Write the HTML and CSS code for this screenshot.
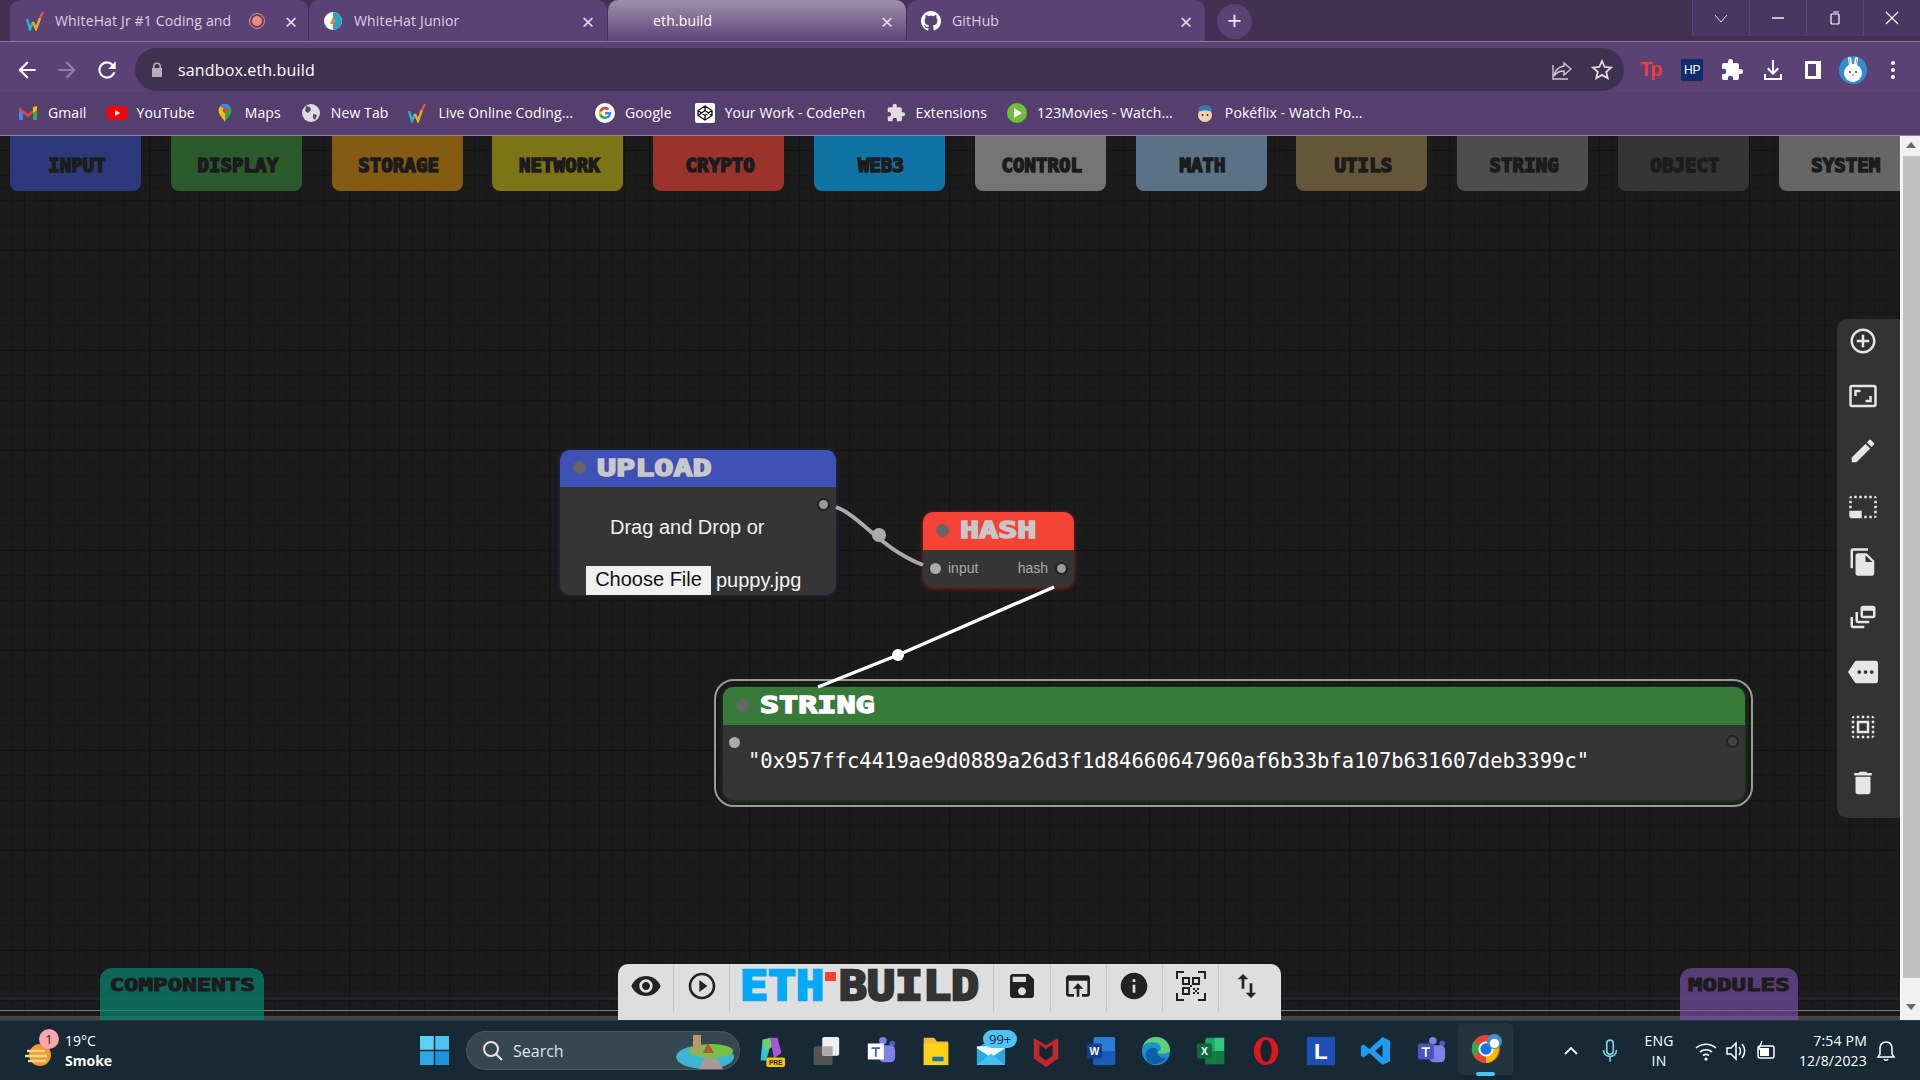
FILE: index.html
```html
<!DOCTYPE html>
<html lang="en">
<head>
    <meta charset="UTF-8">
    <title>eth.build</title>
    <link rel="stylesheet" href="styles.css">
</head>
<body>
    <header class="chrome">
        <div class="tabstrip">
            <div class="tab">
                <svg class="favicon" viewBox="0 0 20 20"><path d="M3 8l3 10 3-7" fill="none" stroke="#29b6c6" stroke-width="2.4"/><path d="M9 11l3 7 4-11" fill="none" stroke="#f5a623" stroke-width="2.4"/><path d="M16 7l3-6" fill="none" stroke="#ef5350" stroke-width="2"/></svg>
                <span class="tab-title tab-title-short">WhiteHat Jr #1 Coding and</span>
                <span class="rec-dot"></span>
                <span class="tab-close">×</span>
            </div>
            <div class="tab">
                <svg class="favicon" viewBox="0 0 20 20"><circle cx="10" cy="10" r="9" fill="#fff"/><path d="M10 1a9 9 0 0 1 0 18z" fill="#2aa3c9"/><path d="M11 4l-4 9h3l-1 4 4-8h-3z" fill="#f58220"/></svg>
                <span class="tab-title">WhiteHat Junior</span>
                <span class="tab-close">×</span>
            </div>
            <div class="tab tab-active">
                <span class="favicon"></span>
                <span class="tab-title">eth.build</span>
                <span class="tab-close">×</span>
            </div>
            <div class="tab">
                <svg class="favicon" viewBox="0 0 16 16"><path fill="#fff" d="M8 0C3.58 0 0 3.58 0 8c0 3.54 2.29 6.53 5.47 7.59.4.07.55-.17.55-.38 0-.19-.01-.82-.01-1.49-2.01.37-2.53-.49-2.69-.94-.09-.23-.48-.94-.82-1.13-.28-.15-.68-.52-.01-.53.63-.01 1.08.58 1.23.82.72 1.21 1.87.87 2.33.66.07-.52.28-.87.51-1.07-1.78-.2-3.64-.89-3.64-3.95 0-.87.31-1.59.82-2.15-.08-.2-.36-1.02.08-2.12 0 0 .67-.21 2.2.82.64-.18 1.32-.27 2-.27s1.36.09 2 .27c1.53-1.04 2.2-.82 2.2-.82.44 1.1.16 1.92.08 2.12.51.56.82 1.27.82 2.15 0 3.07-1.87 3.75-3.65 3.95.29.25.54.73.54 1.48 0 1.07-.01 1.93-.01 2.2 0 .21.15.46.55.38A8.01 8.01 0 0 0 16 8c0-4.42-3.58-8-8-8z"/></svg>
                <span class="tab-title">GitHub</span>
                <span class="tab-close">×</span>
            </div>
            <div class="new-tab">+</div>
            <div class="window-btns">
                <span class="window-btn"><svg width="14" height="14" viewBox="0 0 14 14"><path d="M1 4l6 7 6-7" fill="none" stroke="#ddd"/></svg></span>
                <span class="window-btn"><svg width="14" height="14" viewBox="0 0 14 14"><path d="M1 7h12" stroke="#fff" stroke-width="1.4"/></svg></span>
                <span class="window-btn"><svg width="14" height="14" viewBox="0 0 14 14"><rect x="3" y="3" width="8" height="10" rx="1" fill="none" stroke="#fff" stroke-width="1.2"/><path d="M5 1h6" stroke="#fff"/></svg></span>
                <span class="window-btn"><svg width="14" height="14" viewBox="0 0 14 14"><path d="M1 1l12 12M13 1L1 13" stroke="#fff" stroke-width="1.2"/></svg></span>
            </div>
        </div>

        <div class="toolbar">
            <div class="nav-btns">
                <svg class="nav-icon" viewBox="0 0 24 24"><path d="M20 11H7.83l5.59-5.59L12 4l-8 8 8 8 1.41-1.41L7.83 13H20z"/></svg>
                <svg class="nav-icon nav-off" viewBox="0 0 24 24"><path d="M12 4l-1.41 1.41L16.17 11H4v2h12.17l-5.58 5.59L12 20l8-8z"/></svg>
                <svg class="nav-icon" viewBox="0 0 24 24"><path d="M17.65 6.35A7.96 7.96 0 0 0 12 4a8 8 0 1 0 7.73 10h-2.08A6 6 0 1 1 12 6c1.66 0 3.14.69 4.22 1.78L13 11h7V4z"/></svg>
            </div>
            <div class="urlbar">
                <svg class="lock" viewBox="0 0 12 16"><path fill="#b5adbd" d="M2 6V4.5a4 4 0 0 1 8 0V6h1v9H1V6zm1.5 0h5V4.5a2.5 2.5 0 0 0-5 0z"/></svg>
                <span class="url">sandbox.eth.build</span>
                <svg class="url-icon share" viewBox="0 0 24 24"><path d="M14 5l7 6-7 6v-4c-5 0-8 2-10 5 1-5 4-9 10-10zM3 7v14h15" fill="none" stroke="#cfc9d4" stroke-width="1.4"/></svg>
                <svg class="url-icon" viewBox="0 0 24 24"><path d="M12 3l2.7 6 6.3.6-4.8 4.2 1.5 6.4L12 16.9l-5.7 3.3 1.5-6.4L3 9.6 9.3 9z" fill="none" stroke="#e0dbe4" stroke-width="1.8"/></svg>
            </div>
            <div class="ext-btns">
                <span class="tp">Tp</span>
                <span class="hp">HP</span>
                <svg class="ext-icon" viewBox="0 0 24 24"><path fill="#fff" d="M20.5 11H19V7a2 2 0 0 0-2-2h-4V3.500a2.500 2.500 0 0 0-5 0V5H4a2 2 0 0 0-2 2v3.800h1.500a2.700 2.700 0 0 1 0 5.400H2V20a2 2 0 0 0 2 2h3.800v-1.500a2.700 2.700 0 0 1 5.400 0V22H17a2 2 0 0 0 2-2v-4h1.500a2.500 2.500 0 0 0 0-5z"/></svg>
                <svg class="ext-icon" viewBox="0 0 24 24"><path fill="#fff" d="M11 2h2v11l3.500-3.500L18 11l-6 6-6-6 1.500-1.500L11 13zM3 16h2v4h14v-4h2v6H3z"/></svg>
                <svg class="ext-icon" viewBox="0 0 24 24"><path fill="#fff" fill-rule="evenodd" d="M4 3h16v18H4zm3 3v12h8V6z"/></svg>
                <svg class="avatar" viewBox="0 0 28 28"><circle cx="14" cy="14" r="14" fill="#2f8fd0"/><path d="M10 10L9 1.500h3L13.500 10zM14.500 10L16 1.500h3L18 10z" fill="#fff"/><path d="M11 8l-.6-5M17 8l.6-5" stroke="#f58a4b"/><ellipse cx="14" cy="17" rx="9" ry="9" fill="#fff"/><circle cx="11" cy="16" r="1" fill="#333"/><circle cx="17" cy="16" r="1" fill="#333"/><circle cx="14" cy="19" r="1" fill="#e88"/></svg>
                <svg class="ext-icon kebab" viewBox="0 0 24 24"><circle cx="12" cy="5" r="2" fill="#fff"/><circle cx="12" cy="12" r="2" fill="#fff"/><circle cx="12" cy="19" r="2" fill="#fff"/></svg>
            </div>
        </div>

        <div class="bookmarks">
            <div class="bookmark"><svg class="bm-icon" viewBox="0 0 20 20"><path d="M1 5v12h4V9z" fill="#4285f4"/><path d="M19 5v12h-4V9z" fill="#34a853"/><path d="M1 4l9 7 9-7v3l-9 7-9-7z" fill="#ea4335"/><path d="M15 4l4-1v4l-4 3z" fill="#fbbc04"/></svg>Gmail</div>
            <div class="bookmark"><svg class="bm-icon" viewBox="0 0 20 20"><rect y="3" width="20" height="14" rx="4" fill="#f00"/><path d="M8 7l5 3-5 3z" fill="#fff"/></svg>YouTube</div>
            <div class="bookmark"><svg class="bm-icon" viewBox="0 0 20 20"><path d="M10 1a6.500 6.500 0 0 0-6.500 6.500C3.500 12 8 15 10 19z" fill="#fbbc04"/><path d="M10 1a6.500 6.500 0 0 1 6.500 6.500C16.500 12 12 15 10 19z" fill="#34a853"/><path d="M5 3l5 4 5-4a6.500 6.500 0 0 0-10 0z" fill="#4285f4"/><circle cx="10" cy="7.500" r="2.400" fill="#ea4335"/></svg>Maps</div>
            <div class="bookmark"><svg class="bm-icon" viewBox="0 0 20 20"><circle cx="10" cy="10" r="9" fill="#ddd"/><path d="M5 3l4 1 1 3-3 3-3-2zM12 11l4 1-2 5-2-2z" fill="#5a4275"/></svg>New Tab</div>
            <div class="bookmark"><svg class="bm-icon" viewBox="0 0 20 20"><path d="M1 8l3 10 3-7" fill="none" stroke="#29b6c6" stroke-width="2.400"/><path d="M7 11l3 7 4-11" fill="none" stroke="#f5a623" stroke-width="2.400"/><path d="M14 7l3-6" fill="none" stroke="#ef5350" stroke-width="2"/></svg>Live Online Coding...</div>
            <div class="bookmark bookmark-shift"><svg class="bm-icon" viewBox="0 0 20 20"><circle cx="10" cy="10" r="10" fill="#fff"/><path d="M16 10.300c0-.5 0-.9-.1-1.300H10v2.400h3.400a3 3 0 0 1-1.300 1.900v1.600h2.100c1.200-1.100 1.800-2.700 1.800-4.600z" fill="#4285f4"/><path d="M10 16c1.700 0 3.100-.6 4.200-1.500l-2.100-1.600c-.6.400-1.300.6-2.100.6-1.600 0-3-1.100-3.500-2.500H4.400v1.700A6 6 0 0 0 10 16z" fill="#34a853"/><path d="M6.500 11c-.3-.7-.3-1.400 0-2V7.200H4.400a6 6 0 0 0 0 5.400z" fill="#fbbc04"/><path d="M10 6.400c.9 0 1.800.3 2.400.9l1.800-1.800A6 6 0 0 0 4.400 7.200L6.500 9c.5-1.500 1.900-2.600 3.500-2.600z" fill="#ea4335"/></svg>Google</div>
            <div class="bookmark bookmark-pen"><svg class="bm-icon" viewBox="0 0 20 20"><rect width="20" height="20" rx="2" fill="#fff"/><path d="M10 3l7 4.500v5L10 17l-7-4.500v-5zM10 3v4.500M10 12.500V17M3 7.500l7 5 7-5M3 12.500l7-5 7 5" fill="none" stroke="#111" stroke-width="1.300"/></svg>Your Work - CodePen</div>
            <div class="bookmark"><svg class="bm-icon" viewBox="0 0 24 24"><path fill="#dedede" d="M20.500 11H19V7a2 2 0 0 0-2-2h-4V3.500a2.500 2.500 0 0 0-5 0V5H4a2 2 0 0 0-2 2v3.800h1.500a2.700 2.700 0 0 1 0 5.400H2V20a2 2 0 0 0 2 2h3.800v-1.500a2.700 2.700 0 0 1 5.400 0V22H17a2 2 0 0 0 2-2v-4h1.500a2.500 2.500 0 0 0 0-5z"/></svg>Extensions</div>
            <div class="bookmark"><svg class="bm-icon" viewBox="0 0 20 20"><circle cx="10" cy="10" r="10" fill="#6fbf3a"/><path d="M7 5l8 5-8 5z" fill="#fff"/></svg>123Movies - Watch...</div>
            <div class="bookmark bookmark-shift"><svg class="bm-icon" viewBox="0 0 20 20"><circle cx="10" cy="12" r="7" fill="#f2d1ae"/><path d="M3 9c0-5 3-7 7-7s7 2 7 7c-4-2-10-2-14 0z" fill="#3a78b5"/><circle cx="7.500" cy="12" r="1" fill="#333"/><circle cx="12.500" cy="12" r="1" fill="#333"/></svg>Pokéflix - Watch Po...</div>
        </div>
    </header>

    <main class="canvas">
        <nav class="palette">
            <div class="pal-tab pal-input">INPUT</div>
            <div class="pal-tab pal-display">DISPLAY</div>
            <div class="pal-tab pal-storage">STORAGE</div>
            <div class="pal-tab pal-network">NETWORK</div>
            <div class="pal-tab pal-crypto">CRYPTO</div>
            <div class="pal-tab pal-web3">WEB3</div>
            <div class="pal-tab pal-control">CONTROL</div>
            <div class="pal-tab pal-math">MATH</div>
            <div class="pal-tab pal-utils">UTILS</div>
            <div class="pal-tab pal-string">STRING</div>
            <div class="pal-tab pal-object">OBJECT</div>
            <div class="pal-tab pal-system">SYSTEM</div>
        </nav>

        <!-- graph area, coordinates are relative to the canvas -->
        <div class="node node-upload">
            <div class="node-title"><span class="title-dot"></span><span class="title-text">UPLOAD</span></div>
            <span class="port port-out"></span>
            <p class="drop-text">Drag and Drop or</p>
            <div class="file-row"><span class="file-btn">Choose File</span><span class="file-name">puppy.jpg</span></div>
        </div>

        <div class="node node-hash">
            <div class="node-title"><span class="title-dot"></span><span class="title-text">HASH</span></div>
            <div class="slots"><span class="port-in"></span><span class="slot-name">input</span><span class="slot-name slot-right">hash</span><span class="port-right"></span></div>
        </div>

        <div class="node-frame">
            <div class="node node-string">
                <div class="node-title"><span class="title-dot"></span><span class="title-text">STRING</span></div>
                <span class="port-in string-in"></span>
                <span class="port-right string-out"></span>
                <p class="string-value">"0x957ffc4419ae9d0889a26d3f1d84660647960af6b33bfa107b631607deb3399c"</p>
            </div>
        </div>

        <svg class="links" width="1900" height="884" viewBox="0 0 1900 884">
            <path d="M836 371C860 380 880 412 923 429" fill="none" stroke="#aaa" stroke-width="4"/>
            <circle cx="879" cy="399" r="7" fill="#aaa"/>
            <path d="M1054 451L898 519L818 551" fill="none" stroke="#fff" stroke-width="3.500"/>
            <circle cx="898" cy="519" r="6" fill="#fff"/>
        </svg>

        <aside class="side-tools">
            <svg class="tool" viewBox="0 0 24 24"><path d="M13 7h-2v4H7v2h4v4h2v-4h4v-2h-4V7zm-1-5C6.480 2 2 6.480 2 12s4.480 10 10 10 10-4.480 10-10S17.520 2 12 2zm0 18c-4.410 0-8-3.590-8-8s3.590-8 8-8 8 3.590 8 8-3.590 8-8 8z"/></svg>
            <svg class="tool" viewBox="0 0 24 24"><path d="M19 12h-2v3h-3v2h5v-5zM7 9h3V7H5v5h2V9zm14-6H3c-1.100 0-2 .9-2 2v14c0 1.100.9 2 2 2h18c1.100 0 2-.9 2-2V5c0-1.100-.9-2-2-2zm0 16.010H3V4.990h18v14.020z"/></svg>
            <svg class="tool" viewBox="0 0 24 24"><path d="M3 17.250V21h3.750L17.810 9.940l-3.750-3.750L3 17.250zM20.710 7.040c.39-.39.39-1.020 0-1.410l-2.340-2.340c-.39-.39-1.020-.39-1.410 0l-1.830 1.830 3.750 3.750 1.830-1.830z"/></svg>
            <svg class="tool" viewBox="0 0 24 24"><path d="M23 15h-2v2h2v-2zm0-4h-2v2h2v-2zm0 8h-2v2c1 0 2-1 2-2zM15 3h-2v2h2V3zm8 4h-2v2h2V7zm-2-4v2h2c0-1-1-2-2-2zM3 21h8v-6H1v4c0 1.100.9 2 2 2zM3 7H1v2h2V7zm12 12h-2v2h2v-2zm4-16h-2v2h2V3zm0 16h-2v2h2v-2zM3 3C2 3 1 4 1 5h2V3zm0 8H1v2h2v-2zm8-8H9v2h2V3zM7 3H5v2h2V3z"/></svg>
            <svg class="tool" viewBox="0 0 24 24"><path d="M16 1H4c-1.100 0-2 .9-2 2v14h2V3h12V1zm-1 4l6 6v10c0 1.100-.9 2-2 2H7.990C6.890 23 6 22.100 6 21l.01-14c0-1.100.89-2 1.990-2h7zm-1 7h5.500L14 6.500V12z"/></svg>
            <svg class="tool" viewBox="0 0 24 24"><path d="M8 8H6v7c0 1.100.9 2 2 2h9v-2H8V8zM20 3h-8c-1.100 0-2 .9-2 2v6c0 1.100.9 2 2 2h8c1.100 0 2-.9 2-2V5c0-1.100-.9-2-2-2zm0 8h-8V7h8v4zM4 12H2v7c0 1.100.9 2 2 2h9v-2H4v-7z"/></svg>
            <svg class="tool" viewBox="0 0 24 24"><path d="M22 3H7c-.69 0-1.230.35-1.590.88L0 12l5.410 8.110c.36.53.9.89 1.590.89h15c1.100 0 2-.9 2-2V5c0-1.100-.9-2-2-2zM9 13.500c-.83 0-1.500-.67-1.500-1.500s.67-1.500 1.500-1.500 1.500.67 1.500 1.500-.67 1.500-1.500 1.500zm5 0c-.83 0-1.500-.67-1.500-1.500s.67-1.500 1.500-1.500 1.500.67 1.500 1.500-.67 1.500-1.500 1.500zm5 0c-.83 0-1.500-.67-1.500-1.500s.67-1.500 1.500-1.500 1.500.67 1.500 1.500-.67 1.500-1.500 1.500z"/></svg>
            <svg class="tool" viewBox="0 0 24 24"><path d="M3 5h2V3c-1.100 0-2 .9-2 2zm0 8h2v-2H3v2zm4 8h2v-2H7v2zM3 9h2V7H3v2zm10-6h-2v2h2V3zm6 0v2h2c0-1.100-.9-2-2-2zM5 21v-2H3c0 1.100.9 2 2 2zm-2-4h2v-2H3v2zM9 3H7v2h2V3zm2 18h2v-2h-2v2zm8-8h2v-2h-2v2zm0 8c1.100 0 2-.9 2-2h-2v2zm0-12h2V7h-2v2zm0 8h2v-2h-2v2zm-4 4h2v-2h-2v2zm0-16h2V3h-2v2zM7 17h10V7H7v10zm2-8h6v6H9V9z"/></svg>
            <svg class="tool" viewBox="0 0 24 24"><path d="M6 19c0 1.100.9 2 2 2h8c1.100 0 2-.9 2-2V7H6v12zM19 4h-3.500l-1-1h-5l-1 1H5v2h14V4z"/></svg>
        </aside>

        <div class="bottom-line-blue"></div>
        <div class="bottom-line-gray"></div>
        <div class="bottom-band"></div>

        <div class="drawer drawer-components"><span class="drawer-text">COMPONENTS</span></div>
        <div class="drawer drawer-modules"><span class="drawer-text">MODULES</span></div>

        <div class="bottom-tools">
            <span class="bt-cell"><svg class="bt-icon" viewBox="0 0 24 24"><path d="M12 4.500C7 4.500 2.730 7.610 1 12c1.730 4.390 6 7.500 11 7.500s9.270-3.110 11-7.500c-1.730-4.390-6-7.500-11-7.500zM12 17c-2.760 0-5-2.240-5-5s2.240-5 5-5 5 2.240 5 5-2.240 5-5 5zm0-8c-1.660 0-3 1.340-3 3s1.340 3 3 3 3-1.340 3-3-1.340-3-3-3z"/></svg></span>
            <span class="bt-cell"><svg class="bt-icon" viewBox="0 0 24 24"><path d="M10 16.500l6-4.500-6-4.500v9zM12 2C6.480 2 2 6.480 2 12s4.480 10 10 10 10-4.480 10-10S17.520 2 12 2zm0 18c-4.410 0-8-3.590-8-8s3.590-8 8-8 8 3.590 8 8-3.590 8-8 8z"/></svg></span>
            <span class="bt-logo"><span class="logo-eth">ETH</span><span class="logo-dot"></span><span class="logo-build">BUILD</span></span>
            <span class="bt-cell"><svg class="bt-icon" viewBox="0 0 24 24"><path d="M17 3H5c-1.110 0-2 .9-2 2v14c0 1.100.89 2 2 2h14c1.100 0 2-.9 2-2V7l-4-4zm-5 16c-1.660 0-3-1.340-3-3s1.340-3 3-3 3 1.340 3 3-1.340 3-3 3zm3-10H5V5h10v4z"/></svg></span>
            <span class="bt-cell"><svg class="bt-icon" viewBox="0 0 24 24"><path d="M19 4H5c-1.110 0-2 .9-2 2v12c0 1.100.89 2 2 2h4v-2H5V8h14v10h-4v2h4c1.100 0 2-.9 2-2V6c0-1.100-.89-2-2-2zm-7 6l-4 4h3v6h2v-6h3l-4-4z"/></svg></span>
            <span class="bt-cell"><svg class="bt-icon" viewBox="0 0 24 24"><path d="M12 2C6.480 2 2 6.480 2 12s4.480 10 10 10 10-4.480 10-10S17.520 2 12 2zm1 15h-2v-6h2v6zm0-8h-2V7h2v2z"/></svg></span>
            <span class="bt-cell"><svg class="bt-icon qr" viewBox="0 0 30 30"><path d="M1 8V1h7M22 1h7v7M29 22v7h-7M8 29H1v-7" fill="none" stroke="#222" stroke-width="2"/><path d="M7 7h6v6H7zM17 7h6v6h-6zM7 17h6v6H7z" fill="none" stroke="#222" stroke-width="2"/><path d="M17 17h2v2h-2zM21 17h2v2h-2zM19 19h2v2h-2zM17 21h2v2h-2zM21 21h2v2h-2zM14 14h2v2h-2z" fill="#222"/></svg></span>
            <span class="bt-cell bt-last"><svg class="bt-icon" viewBox="0 0 24 24"><path d="M16 17.010V10h-2v7.010h-3L15 21l4-3.990h-3zM9 3L5 6.990h3V14h2V6.990h3L9 3z"/></svg></span>
        </div>

        <div class="scrollbar">
            <span class="sb-up"></span>
            <span class="sb-thumb"></span>
            <span class="sb-down"></span>
        </div>
    </main>

    <footer class="taskbar">
        <div class="weather">
            <svg class="weather-icon" viewBox="0 0 30 30"><circle cx="16" cy="16" r="11" fill="#f29a2e"/><path d="M3 12h18M1 17h22M4 22h18" stroke="#f2d48a" stroke-width="2.500"/></svg>
            <span class="weather-badge">1</span>
            <div class="weather-text"><span>19°C</span><strong>Smoke</strong></div>
        </div>
        <div class="task-center">
            <svg class="win-logo" viewBox="0 0 30 30"><rect width="14.200" height="14.200" fill="#5fd0f5"/><rect x="15.800" width="14.200" height="14.200" fill="#4cc2f1"/><rect y="15.800" width="14.200" height="14.200" fill="#2aa8e8"/><rect x="15.800" y="15.800" width="14.200" height="14.200" fill="#1b95de"/></svg>
            <div class="search">
                <svg class="search-icon" viewBox="0 0 24 24"><path d="M10 3a7 7 0 1 1 0 14 7 7 0 0 1 0-14zM15 15l6 6" fill="none" stroke="#e6e6e6" stroke-width="2"/></svg>
                <span>Search</span>
                <svg class="search-art" viewBox="0 0 60 36"><ellipse cx="30" cy="24" rx="29" ry="12" fill="#3fb5d6"/><ellipse cx="36" cy="18" rx="22" ry="7" fill="#76c043"/><rect x="18" y="2" width="8" height="18" fill="#b89a6a"/><path d="M28 20l5-10 6 10z" fill="#b5533c"/><path d="M24 36l6-12 12 2 6 10z" fill="#a89a90"/></svg>
            </div>
            <div class="task-icons">
                <span class="task-icon"><svg viewBox="0 0 34 34"><path d="M8 5h10l-6 22H6z" fill="#2fc4d8"/><path d="M16 3h8l4 16-8 6z" fill="#a855d8"/><path d="M8 5l8-2 2 10-8 4z" fill="#6fd06a"/><rect x="12" y="24" width="20" height="10" rx="2" fill="#f7c600"/><text x="22" y="32" class="pre-text">PRE</text></svg></span>
                <span class="task-icon"><svg viewBox="0 0 34 34"><rect x="4" y="12" width="20" height="20" rx="2" fill="#555"/><rect x="13" y="2" width="18" height="20" rx="2" fill="#eee"/><rect x="13" y="12" width="11" height="10" fill="#aaa"/></svg></span>
                <span class="task-icon"><svg viewBox="0 0 34 34"><circle cx="19" cy="6" r="4" fill="#7b83eb"/><circle cx="29" cy="9" r="3" fill="#5059c9"/><rect x="15" y="11" width="17" height="18" rx="5" fill="#7b83eb"/><rect x="3" y="9" width="17" height="17" fill="#fff"/><path d="M7 13h9v2h-3.500v8h-2v-8H7z" fill="#5059c9"/></svg></span>
                <span class="task-icon"><svg viewBox="0 0 34 34"><path d="M4 3h11l3 4h12v25H4z" fill="#f6b93b"/><path d="M4 9h26v23H4z" fill="#fcd116"/><rect x="13" y="23" width="12" height="5" rx="1" fill="#1a73b8"/></svg></span>
                <span class="task-icon"><svg viewBox="0 0 34 34"><path d="M2 14l15-10 15 10v18H2z" fill="#29a8e0"/><path d="M2 14l15 10 15-10v-2H2z" fill="#eaf6fc"/><path d="M2 32l15-12 15 12z" fill="#43c0f0"/></svg><span class="mail-badge">99+</span></span>
                <span class="task-icon"><svg viewBox="0 0 34 34"><path d="M4 3l13 8 13-8v22l-13 9-13-9z" fill="#c0292b"/><path d="M10 10l7 5 7-5v12l-7 5-7-5z" fill="#16262f"/></svg></span>
                <span class="task-icon"><svg viewBox="0 0 34 34"><rect x="9" y="2" width="23" height="30" rx="2" fill="#2b7cd3"/><rect x="9" y="17" width="23" height="15" fill="#185abd"/><rect x="2" y="9" width="16" height="16" rx="2" fill="#103f91"/><text x="10" y="21" class="app-letter">W</text></svg></span>
                <span class="task-icon"><svg viewBox="0 0 34 34"><circle cx="17" cy="17" r="15" fill="#1b8fd0"/><path d="M32 17c0-8-6-15-15-15C10 2 5 6 3 12c3-4 8-5 13-4 5 1 7 5 6 8-1 2-5 2-5 2 4 2 10 3 15-1z" fill="#5fd07a"/><path d="M6 22c0-6 5-10 10-8 4 1 3 5 2 5 3 5 7 6 10 5-3 5-9 8-15 7-4-1-7-5-7-9z" fill="#0f5ea8"/></svg></span>
                <span class="task-icon"><svg viewBox="0 0 34 34"><rect x="11" y="3" width="20" height="28" rx="2" fill="#21a366"/><rect x="21" y="3" width="10" height="14" fill="#33c481"/><rect x="11" y="17" width="20" height="14" fill="#107c41"/><rect x="2" y="9" width="16" height="16" rx="2" fill="#0e6b38"/><text x="10" y="21" class="app-letter">X</text></svg></span>
                <span class="task-icon"><svg viewBox="0 0 34 34"><ellipse cx="17" cy="17" rx="13" ry="15" fill="#e0151f"/><ellipse cx="17" cy="17" rx="6" ry="12" fill="#16262f"/></svg></span>
                <span class="task-icon"><svg viewBox="0 0 34 34"><rect x="2" y="2" width="30" height="30" fill="#1e4fb8"/><text x="17" y="26" class="l-letter">L</text></svg></span>
                <span class="task-icon"><svg viewBox="0 0 34 34"><path d="M24 2l8 4v22l-8 4-14-13-6 5-3-2v-10l3-2 6 5zM24 10l-8 7 8 7z" fill="#1f9cf0"/></svg></span>
                <span class="task-icon"><svg viewBox="0 0 34 34"><circle cx="19" cy="6" r="4" fill="#7b83eb"/><circle cx="29" cy="9" r="3" fill="#5059c9"/><rect x="15" y="11" width="17" height="18" rx="5" fill="#7b83eb"/><rect x="3" y="9" width="17" height="17" rx="2" fill="#4b53bc"/><path d="M7 13h9v2h-3.500v8h-2v-8H7z" fill="#fff"/></svg></span>
                <span class="task-icon task-active"><svg viewBox="0 0 34 34"><circle cx="17" cy="17" r="15" fill="#ea4335"/><path d="M17 17L4 24a15 15 0 0 1 0-15z" fill="#34a853"/><path d="M17 17l13-4a15 15 0 0 1-13 19z" fill="#fbbc04"/><circle cx="17" cy="17" r="8" fill="#fff"/><circle cx="17" cy="17" r="6" fill="#1a73e8"/><circle cx="26" cy="9" r="8" fill="#3a93d0"/><circle cx="26" cy="11" r="5" fill="#fff"/></svg></span>
            </div>
        </div>
        <div class="tray">
            <svg class="tray-chevron" viewBox="0 0 14 14"><path d="M1 10l6-6 6 6" fill="none" stroke="#fff" stroke-width="1.800"/></svg>
            <svg class="tray-mic" viewBox="0 0 24 24"><path d="M12 2a3 3 0 0 1 3 3v7a3 3 0 0 1-6 0V5a3 3 0 0 1 3-3zM6 11c0 4 3 6 6 6s6-2 6-6M12 17v5" fill="none" stroke="#7fd4ee" stroke-width="1.500"/></svg>
            <div class="tray-lang"><span>ENG</span><span>IN</span></div>
            <svg class="tray-icon tray-wifi" viewBox="0 0 24 24"><path d="M2 9c6-5 14-5 20 0M6 13c4-3 8-3 12 0M9 16.500c2-1.500 4-1.500 6 0" fill="none" stroke="#fff" stroke-width="1.600"/><circle cx="12" cy="20" r="1.600" fill="#fff"/></svg>
            <svg class="tray-icon" viewBox="0 0 24 24"><path d="M3 9h4l5-5v16l-5-5H3zM15 8c2 2 2 6 0 8M18 5c3.500 4 3.500 10 0 14" fill="none" stroke="#fff" stroke-width="1.500"/></svg>
            <svg class="tray-icon" viewBox="0 0 24 24"><rect x="4" y="7" width="16" height="12" rx="2" fill="none" stroke="#fff" stroke-width="1.500"/><rect x="6" y="9" width="9" height="8" fill="#fff"/><path d="M8 2L5 10h3l-1 5" fill="none" stroke="#fff" stroke-width="1.300"/></svg>
            <div class="tray-clock"><span>7:54 PM</span><span>12/8/2023</span></div>
            <svg class="tray-bell" viewBox="0 0 24 24"><path d="M12 3c4 0 6 3 6 7v5l2 3H4l2-3v-5c0-4 2-7 6-7zM10 20c.5 1.500 3.500 1.500 4 0" fill="none" stroke="#fff" stroke-width="1.500"/></svg>
        </div>
    </footer>
</body>
</html>
```

FILE: styles.css
```css
* {
    box-sizing: border-box;
}
html, body {
    margin: 0;
    width: 1920px;
    height: 1080px;
    overflow: hidden;
}
body {
    display: flex;
    flex-direction: column;
    font-family: "Open Sans", "Liberation Sans", sans-serif;
    background-color: #1a1a1a;
    color: #fff;
}

/* browser chrome */
.chrome {
    height: 136px;
    flex: none;
    background-color: #5a4275;
    border-bottom: 1px solid #8f7fa5;
}
.tabstrip {
    height: 42px;
    display: flex;
    align-items: flex-start;
    padding-left: 10px;
    background-color: #433153;
    border-bottom: 1px solid #8a7a98;
    position: relative;
}
.tab {
    width: 298px;
    height: 41px;
    margin-right: 1px;
    padding: 0 9px 0 14px;
    display: flex;
    align-items: center;
    gap: 11px;
    background-color: #5a4275;
    border-radius: 10px 10px 0 0;
    font-size: 14px;
    letter-spacing: 0.15px;
    color: #d9d2e0;
}
.tab-active {
    color: #fff;
    background: linear-gradient(#a08fab, #8c7a9b 30%, #5f4679 95%);
}
.favicon {
    width: 20px;
    height: 20px;
    flex: none;
}
.tab-title {
    flex: 1;
    white-space: nowrap;
}
.tab-title-short {
    flex: none;
    width: 182px;
}
.rec-dot {
    width: 14px;
    height: 14px;
    flex: none;
    margin-right: 6px;
    margin-left: 2px;
    border-radius: 50%;
    background-color: #f28b76;
    border: 2px solid #5a4275;
    outline: 1.5px solid #f28b76;
}
.tab-close {
    width: 20px;
    flex: none;
    font-size: 22px;
    line-height: 20px;
    text-align: center;
    color: #e6e1ea;
}
.new-tab {
    width: 35px;
    height: 35px;
    margin: 4px 0 0 11px;
    border-radius: 50%;
    background-color: #5a4275;
    color: #e6e1ea;
    font-size: 26px;
    line-height: 33px;
    text-align: center;
}
.window-btns {
    margin-left: auto;
    height: 36px;
    display: flex;
    background-color: #4a3761;
}
.window-btn {
    width: 57px;
    display: flex;
    align-items: center;
    justify-content: center;
    border-left: 1px solid #5a4275;
}

.toolbar {
    height: 50px;
    padding-top: 5px;
    display: flex;
    align-items: center;
    position: relative;
}
.nav-btns {
    width: 135px;
    padding: 0 15px 0 14px;
    display: flex;
    justify-content: space-between;
}
.nav-icon {
    width: 26px;
    height: 26px;
    fill: #fff;
}
.nav-off {
    fill: #8f7fa5;
}
.urlbar {
    width: 1489px;
    height: 43px;
    padding: 0 10px 0 16px;
    display: flex;
    align-items: center;
    border-radius: 22px;
    background-color: #3f3150;
}
.lock {
    width: 12px;
    height: 16px;
    margin-right: 15px;
}
.url {
    flex: 1;
    font-size: 16px;
    letter-spacing: 0.15px;
    color: #fff;
}
.url-icon {
    width: 24px;
    height: 24px;
    margin-left: 16px;
}
.ext-btns {
    padding-left: 8px;
    display: grid;
    grid-template-columns: repeat(7, 40.2px);
    align-items: center;
    justify-items: center;
}
.tp {
    width: 24px;
    color: #f03b3b;
    font: bold 20px "Liberation Sans", sans-serif;
    letter-spacing: -2px;
}
.hp {
    width: 22px;
    height: 22px;
    background-color: #0f2c6e;
    font: 12px/22px "Liberation Sans", sans-serif;
    text-align: center;
}
.ext-icon {
    width: 24px;
    height: 24px;
}
.avatar {
    width: 28px;
    height: 28px;
}
.bookmarks {
    height: 43px;
    padding: 0 0 2px 18px;
    display: flex;
    align-items: center;
    gap: 20px;
    background-color: #553f6e;
    font-size: 14px;
    letter-spacing: 0.1px;
    white-space: nowrap;
}
.bookmark {
    display: flex;
    align-items: center;
    gap: 10px;
}
.bookmark-shift {
    margin-left: 2px;
}
.bookmark-pen {
    margin-left: 3px;
}
.bm-icon {
    width: 20px;
    height: 20px;
}

/* eth.build canvas */
.canvas {
    flex: 1;
    position: relative;
    overflow: hidden;
    background-color: #1b1b1b;
    background-image:
        linear-gradient(#131313 1px, transparent 1px),
        linear-gradient(90deg, #131313 1px, transparent 1px),
        linear-gradient(#161616 1px, transparent 1px),
        linear-gradient(90deg, #161616 1px, transparent 1px);
    background-size: 100px 100px, 100px 100px, 12.5px 12.5px, 12.5px 12.5px;
    background-position: 49px 14px, 49px 14px, 11.5px 1.5px, 11.5px 1.5px;
}
.palette {
    width: 1920px;
    padding-left: 10px;
    display: grid;
    grid-template-columns: repeat(12, 131px);
    column-gap: 29.8px;
}
.pal-tab {
    height: 55px;
    display: flex;
    align-items: center;
    justify-content: center;
    padding: 2px 0 0 3px;
    border-radius: 0 0 8px 8px;
    color: #1c1c1c;
    font: bold 19px "DejaVu Sans Mono", monospace;
    letter-spacing: 0.1px;
    -webkit-text-stroke: 1.6px #1c1c1c;
}
.pal-input { background-color: #2c3a7b; }
.pal-display { background-color: #2b5a2d; }
.pal-storage { background-color: #855a13; }
.pal-network { background-color: #7c7416; }
.pal-crypto { background-color: #9a332b; }
.pal-web3 { background-color: #0f74a5; }
.pal-control { background-color: #757575; }
.pal-math { background-color: #5a7187; }
.pal-utils { background-color: #65563a; }
.pal-string { background-color: #4d4d4d; }
.pal-object { background-color: #353535; }
.pal-system { background-color: #666666; }

.links {
    position: absolute;
    left: 0;
    top: 0;
    pointer-events: none;
}
.node {
    position: absolute;
    background-color: #353535;
    border-radius: 10px;
    overflow: visible;
}
.node-title {
    height: 37px;
    padding: 0 0 2px 13px;
    display: flex;
    align-items: center;
    gap: 11px;
    border-radius: 10px 10px 0 0;
    font: bold 23px "DejaVu Sans Mono", monospace;
    color: #c8c8c8;
    -webkit-text-stroke: 1.5px #c8c8c8;
}
.title-text {
    display: inline-block;
    transform: scaleX(1.38);
    transform-origin: left center;
}
.title-dot {
    width: 13px;
    height: 13px;
    flex: none;
    border-radius: 50%;
    background-color: #666;
}
.node-upload {
    left: 560px;
    top: 314px;
    width: 276px;
    height: 145px;
    box-shadow: 0 0 4px #26305f;
}
.node-upload .node-title {
    background-color: #3f51b5;
}
.port {
    position: absolute;
    left: 259px;
    top: 50px;
    width: 9px;
    height: 9px;
    border-radius: 50%;
    background-color: #999;
    box-shadow: 0 0 0 2px #222;
}
.drop-text {
    margin: 0;
    padding: 27px 0 0 50px;
    font: 20px/26px "Liberation Sans", sans-serif;
    color: #f0f0f0;
}
.file-row {
    margin: 26px 0 0 26px;
    display: flex;
    align-items: center;
    gap: 5px;
    font: 20px/29px "Liberation Sans", sans-serif;
}
.file-btn {
    width: 125px;
    height: 29px;
    text-align: center;
    background-color: #f0f0f0;
    color: #111;
    line-height: 27px;
}
.file-name {
    color: #f5f5f5;
}
.node-hash {
    left: 923px;
    top: 376px;
    width: 151px;
    height: 75px;
    box-shadow: 0 1px 4px #8c2a24;
}
.node-hash .node-title {
    height: 38px;
    background-color: #f44336;
}
.slots {
    height: 36px;
    padding: 0 7px;
    display: flex;
    align-items: center;
    font: 14px "Liberation Sans", sans-serif;
    color: #aaa;
}
.port-in {
    width: 11px;
    height: 11px;
    flex: none;
    border-radius: 50%;
    background-color: #aaa;
}
.port-right {
    width: 9px;
    height: 9px;
    flex: none;
    margin-right: 1px;
    border-radius: 50%;
    background-color: #999;
    box-shadow: 0 0 0 2px #222;
}
.slot-name {
    margin-left: 7px;
}
.slot-right {
    margin-left: auto;
    margin-right: 9px;
}
.node-frame {
    position: absolute;
    left: 714px;
    top: 543px;
    width: 1039px;
    height: 128px;
    border: 2px solid #9a9a9a;
    border-radius: 20px;
}
.node-string {
    left: 7px;
    top: 6px;
    width: 1022px;
    height: 113px;
    box-shadow: 0 1px 4px #23481f;
}
.node-string .node-title {
    height: 38px;
    color: #fff;
    -webkit-text-stroke: 1.5px #fff;
    background-color: #377a3a;
}
.string-in {
    position: absolute;
    left: 6px;
    top: 50px;
}
.string-out {
    position: absolute;
    right: 7px;
    top: 50px;
    background-color: #444;
}
.string-value {
    margin: 0;
    padding: 22px 0 0 25px;
    font: 20.55px/28px "DejaVu Sans Mono", monospace;
    color: #fff;
}

.side-tools {
    position: absolute;
    left: 1837px;
    top: 183px;
    width: 63px;
    height: 499px;
    padding: 7px 11px 0 0;
    display: flex;
    flex-direction: column;
    align-items: center;
    gap: 25.2px;
    background-color: #333;
    border-radius: 10px 0 0 10px;
}
.tool {
    width: 30px;
    height: 30px;
    flex: none;
    fill: #e6e6e6;
}

.bottom-line-blue {
    position: absolute;
    left: 0;
    top: 861px;
    width: 1900px;
    height: 3px;
    background-color: #1e2233;
}
.bottom-line-gray {
    position: absolute;
    left: 0;
    top: 874px;
    width: 1900px;
    height: 1px;
    background-color: #7d7d7d;
}
.bottom-band {
    position: absolute;
    left: 0;
    top: 880px;
    width: 1900px;
    height: 4px;
    background-color: #454545;
}
.drawer {
    position: absolute;
    top: 832px;
    height: 52px;
    padding-top: 7px;
    border-radius: 12px 12px 0 0;
    text-align: center;
    font: bold 17px "DejaVu Sans Mono", monospace;
    color: #1c1c1c;
    -webkit-text-stroke: 1px #1c1c1c;
}
.drawer-text {
    display: inline-block;
    transform: scaleX(1.42);
}
.drawer-components {
    left: 100px;
    width: 164px;
    background-color: rgba(8, 130, 110, 0.75);
}
.drawer-modules {
    left: 1680px;
    width: 118px;
    background-color: rgba(125, 80, 170, 0.65);
}
.bottom-tools {
    position: absolute;
    left: 618px;
    top: 828px;
    width: 663px;
    height: 56px;
    padding-bottom: 8px;
    display: flex;
    background-color: #dedede;
    border-radius: 10px 10px 0 0;
}
.bt-cell {
    width: 56.200px;
    padding-bottom: 4px;
    display: flex;
    align-items: center;
    justify-content: center;
    border-right: 1px solid #c8c8c8;
}
.bt-last {
    border-right: 0;
}
.bt-icon {
    width: 32px;
    height: 32px;
    fill: #222;
}
.qr {
    width: 30px;
    height: 30px;
}
.bt-logo {
    width: 264px;
    padding-left: 10px;
    display: flex;
    align-items: flex-start;
    border-right: 1px solid #c8c8c8;
    font: bold 40px/44px "DejaVu Sans Mono", monospace;
}
.logo-eth {
    width: 84px;
    flex: none;
    color: #03a9f4;
    -webkit-text-stroke: 2.5px #03a9f4;
    transform: scaleX(1.163);
    transform-origin: left center;
}
.logo-dot {
    width: 11px;
    height: 9px;
    margin: 8px 3px 0 1px;
    flex: none;
    background-color: #f44336;
}
.logo-build {
    flex: none;
    color: #333;
    -webkit-text-stroke: 2.5px #333;
    transform: scaleX(1.163);
    transform-origin: left center;
}

.scrollbar {
    position: absolute;
    left: 1900px;
    top: 0;
    width: 20px;
    height: 884px;
    padding-left: 1px;
    display: flex;
    flex-direction: column;
    align-items: center;
    background-color: #f1f1f1;
    border-left: 1px solid #fff;
}
.sb-up {
    width: 0;
    height: 0;
    margin-top: 6px;
    border-left: 5px solid transparent;
    border-right: 5px solid transparent;
    border-bottom: 6px solid #6a6a6a;
}
.sb-thumb {
    width: 17px;
    height: 822px;
    margin-top: 8px;
    background-color: #c1c1c1;
}
.sb-down {
    width: 0;
    height: 0;
    margin-top: 26px;
    border-left: 5px solid transparent;
    border-right: 5px solid transparent;
    border-top: 6px solid #6a6a6a;
}

/* windows taskbar */
.taskbar {
    height: 60px;
    flex: none;
    position: relative;
    display: flex;
    background-color: #162935;
    border-top: 1px solid #2a3a44;
}
.weather {
    width: 420px;
    position: relative;
    padding-left: 65px;
    display: flex;
    align-items: center;
}
.weather-icon {
    position: absolute;
    left: 24px;
    top: 18px;
    width: 30px;
    height: 30px;
}
.weather-badge {
    position: absolute;
    left: 39px;
    top: 8px;
    width: 20px;
    height: 20px;
    border-radius: 50%;
    background-color: #f8a5b0;
    color: #222;
    font-size: 13px;
    line-height: 20px;
    text-align: center;
}
.weather-text {
    display: flex;
    flex-direction: column;
    gap: 2px;
    font-size: 14px;
    line-height: 18px;
}
.task-center {
    display: flex;
    align-items: center;
}
.win-logo {
    width: 29px;
    height: 29px;
    margin-right: 17px;
}
.search {
    width: 274px;
    height: 39px;
    padding-left: 14px;
    display: flex;
    align-items: center;
    gap: 8px;
    position: relative;
    background-color: #37474f;
    border: 1px solid #4a5a63;
    border-radius: 20px;
    font-size: 16px;
    color: #dfe4e6;
}
.search-icon {
    width: 24px;
    height: 24px;
}
.search-art {
    position: absolute;
    right: 4px;
    top: 1px;
    width: 60px;
    height: 36px;
}
.task-icons {
    margin-left: 3px;
    display: flex;
}
.task-icon {
    width: 55px;
    height: 56px;
    position: relative;
    display: flex;
    align-items: center;
    justify-content: center;
}
.task-icon svg {
    width: 32px;
    height: 32px;
}
.task-active {
    background-color: #22353f;
    border-radius: 6px;
    border-bottom: 4px solid #16262f;
}
.task-active::after {
    content: "";
    position: absolute;
    left: 18px;
    bottom: -1px;
    width: 19px;
    height: 4px;
    border-radius: 2px;
    background-color: #4fc3f7;
}
.mail-badge {
    position: absolute;
    left: 20px;
    top: 7px;
    padding: 0 6px;
    border-radius: 10px;
    background-color: #4fc3f7;
    color: #0e2430;
    font-size: 13px;
    line-height: 18px;
}
.pre-text {
    font: bold 7px "Liberation Sans", sans-serif;
    text-anchor: middle;
    fill: #222;
}
.app-letter {
    font: bold 11px "Liberation Sans", sans-serif;
    text-anchor: middle;
    fill: #fff;
}
.l-letter {
    font: bold 24px "Liberation Sans", sans-serif;
    text-anchor: middle;
    fill: #fff;
}
.tray {
    position: absolute;
    left: 1560px;
    top: 0;
    width: 360px;
    height: 59px;
    display: flex;
    align-items: center;
    font-size: 14px;
    letter-spacing: 0.2px;
}
.tray-chevron {
    width: 14px;
    height: 14px;
    margin-left: 4px;
}
.tray-mic {
    width: 26px;
    height: 26px;
    margin-left: 19px;
}
.tray-lang {
    width: 50px;
    margin-left: 11px;
    display: flex;
    flex-direction: column;
    align-items: center;
    gap: 2px;
    line-height: 18px;
}
.tray-icon {
    width: 24px;
    height: 24px;
    margin-left: 6px;
}
.tray-wifi {
    margin-left: 10px;
}
.tray-clock {
    width: 89px;
    display: flex;
    flex-direction: column;
    align-items: flex-end;
    gap: 2px;
    line-height: 18px;
}
.tray-bell {
    width: 24px;
    height: 24px;
    margin-left: 7px;
}
```
